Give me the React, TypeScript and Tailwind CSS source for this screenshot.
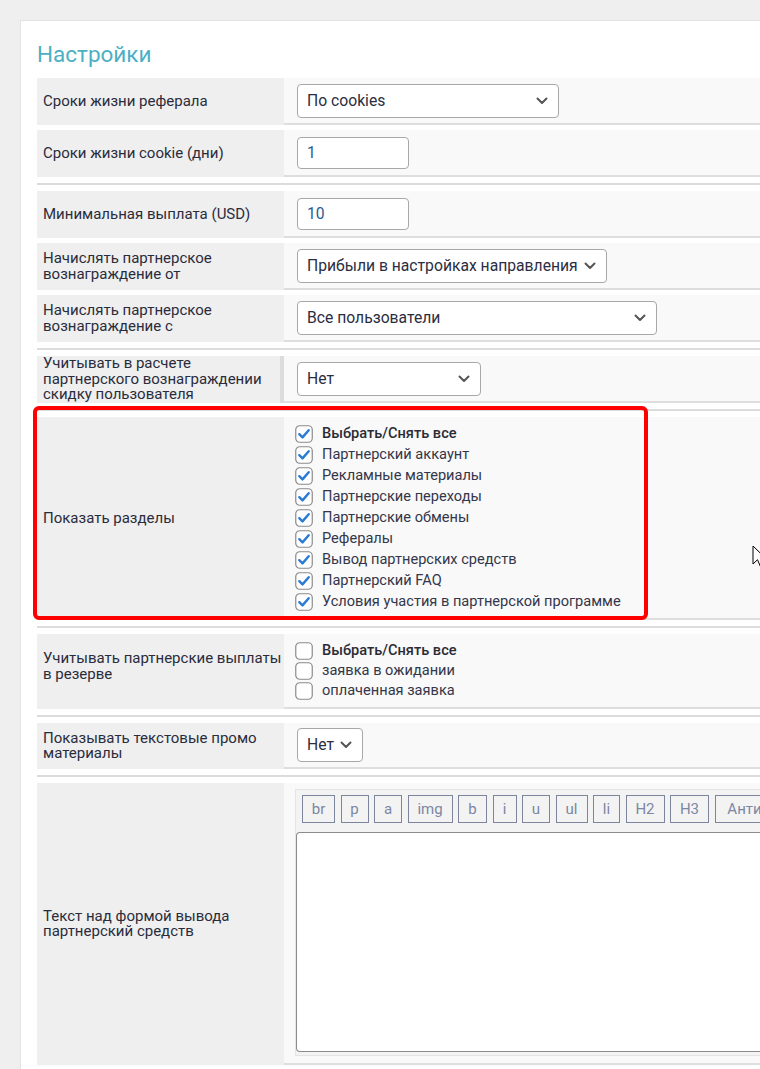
import React from "react"

const font = { fontFamily: "Roboto, 'Noto Sans', Arial, sans-serif" }

function Chevron() {
  return (
    <svg width="12" height="8" viewBox="0 0 12 8" className="shrink-0">
      <path d="M1.5 1.5l4.5 4.5 4.5-4.5" fill="none" stroke="#555" strokeWidth="2" strokeLinecap="round" strokeLinejoin="round" />
    </svg>
  )
}

function Select({ text, w }: { text: string; w: string }) {
  return (
    <div className={`${w} h-[34px] bg-white border border-[#a8a8a8] rounded-[4px] flex items-center justify-between pl-[9px] pr-[10px] text-[15.7px] text-[#2b2d42]`}>
      <span className="whitespace-nowrap">{text}</span>
      <Chevron />
    </div>
  )
}

function Input({ value }: { value: string }) {
  return (
    <div className="w-[112px] h-[32px] bg-white border border-[#a8a8a8] rounded-[4px] flex items-center pl-[9px] text-[15.7px] text-[#2c5a92]">
      {value}
    </div>
  )
}

function Box({ checked }: { checked: boolean }) {
  return (
    <svg width="18" height="18" viewBox="0 0 18 18" className="shrink-0">
      <rect x="0.75" y="0.75" width="16.5" height="16.5" rx="4" fill="#fff" stroke="#8a8a8a" strokeWidth="1.2" />
      {checked && (
        <path d="M4.3 9.2l3.2 3.2 6.2-7.2" fill="none" stroke="#2a7bd3" strokeWidth="2.4" strokeLinecap="round" strokeLinejoin="round" />
      )}
    </svg>
  )
}

function Checks({ items, checked, step }: { items: string[]; checked: boolean; step: string }) {
  return (
    <div className="flex flex-col">
      {items.map((t, i) => (
        <div key={i} className={`flex items-center gap-[9px] ${step}`}>
          <Box checked={checked} />
          <span className={`text-[14.6px] whitespace-nowrap ${i === 0 ? "font-medium text-[#2b2b35]" : "text-[#34364a]"}`}>{t}</span>
        </div>
      ))}
    </div>
  )
}

function Row({ label, h, children, labelCls = "", valueCls = "pl-[13px]" }: { label: React.ReactNode; h: string; children?: React.ReactNode; labelCls?: string; valueCls?: string }) {
  return (
    <div className={`flex ${h} mb-[5px]`}>
      <div className={`w-[247px] shrink-0 bg-[#efefef] flex items-center pl-[6px] text-[15px] leading-[15.5px] text-[#2a2c3c] whitespace-nowrap ${labelCls}`}>
        <div>{label}</div>
      </div>
      <div className={`flex-1 bg-[#f9f9f9] border-b-2 border-[#dedede] flex items-center ${valueCls}`}>{children}</div>
    </div>
  )
}

function Sep() {
  return <div className="h-[2px] bg-[#dcdcdc] mt-[6px] mb-[6px]" />
}

const sections = [
  "Выбрать/Снять все",
  "Партнерский аккаунт",
  "Рекламные материалы",
  "Партнерские переходы",
  "Партнерские обмены",
  "Рефералы",
  "Вывод партнерских средств",
  "Партнерский FAQ",
  "Условия участия в партнерской программе",
]

const reserve = ["Выбрать/Снять все", "заявка в ожидании", "оплаченная заявка"]

const tags = [
  { t: "br", w: "w-[33px]" },
  { t: "p", w: "w-[28px]" },
  { t: "a", w: "w-[28px]" },
  { t: "img", w: "w-[45px]" },
  { t: "b", w: "w-[29px]" },
  { t: "i", w: "w-[24px]" },
  { t: "u", w: "w-[28px]" },
  { t: "ul", w: "w-[32px]" },
  { t: "li", w: "w-[27px]" },
  { t: "H2", w: "w-[39px]" },
  { t: "H3", w: "w-[39px]" },
  { t: "Анти", w: "w-[60px]" },
]

export default function App() {
  return (
    <div className="relative w-[760px] h-[1069px] overflow-hidden bg-[#efefef]" style={font}>
      <div className="ml-[20px] mt-[20px] h-[1049px] bg-white border-l border-t border-[#e3e3e3] pl-[16px] pt-[19px]">
        <h1 className="text-[22.5px] leading-[28px] text-[#4bb0c4] mb-[10px]">Настройки</h1>

        <Row label="Сроки жизни реферала" h="h-[47px]">
          <Select text="По cookies" w="w-[262px]" />
        </Row>
        <Row label="Сроки жизни cookie (дни)" h="h-[47px]">
          <Input value="1" />
        </Row>
        <Sep />
        <Row label="Минимальная выплата (USD)" h="h-[47px]">
          <Input value="10" />
        </Row>
        <Row label={<>Начислять партнерское<br />вознаграждение от</>} h="h-[47px]">
          <Select text="Прибыли в настройках направления" w="w-[310px]" />
        </Row>
        <Row label={<>Начислять партнерское<br />вознаграждение с</>} h="h-[47px]">
          <Select text="Все пользователи" w="w-[360px]" />
        </Row>
        <Sep />
        <Row
          label={<>Учитывать в расчете<br />партнерского вознаграждении<br />скидку пользователя</>}
          h="h-[47px]"
          labelCls="border-r-[4px] border-[#dcdcdc]"
        >
          <Select text="Нет" w="w-[184px]" />
        </Row>
        <Sep />
        <Row label="Показать разделы" h="h-[203px]" valueCls="pl-[11px]">
          <Checks items={sections} checked step="h-[21px]" />
        </Row>
        <Sep />
        <Row label={<>Учитывать партнерские выплаты<br />в резерве</>} h="h-[75px]" labelCls="pb-[10px]" valueCls="pl-[11px]">
          <Checks items={reserve} checked={false} step="h-[20px]" />
        </Row>
        <Sep />
        <Row label={<>Показывать текстовые промо<br />материалы</>} h="h-[46px]">
          <Select text="Нет" w="w-[66px]" />
        </Row>
        <Sep />
        <Row label={<>Текст над формой вывода<br />партнерский средств</>} h="h-[282px]" valueCls="pl-[11px] items-start pt-[6px]">
          <div className="flex-1 h-[267px] bg-[#f3f3f3] border border-[#e4e4e4] border-r-0 flex flex-col">
            <div className="flex gap-[5.5px] pl-[6px] pt-[5px] h-[42px] shrink-0">
              {tags.map((b) => (
                <div key={b.t} className={`${b.w} h-[28px] shrink-0 border border-[#7c859c] flex items-center justify-center text-[15px] text-[#7c87a2]`}>
                  {b.t}
                </div>
              ))}
            </div>
            <div className="h-[220px] bg-white border border-[#8c8c8c] border-r-0 rounded-l-[4px]" />
          </div>
        </Row>
      </div>

      {/* annotation */}
      <div className="absolute left-[33px] top-[406px] w-[615px] h-[214px] border-[4px] border-[#ff0000] rounded-[6px]" />

      {/* mouse pointer */}
      <svg className="absolute left-[752px] top-[545px]" width="14" height="24" viewBox="0 0 14 24">
        <path d="M1 1v18l4.5-4.3 3 7 3-1.3-3-6.8H14z" fill="#fff" stroke="#000" strokeWidth="1" strokeLinejoin="round" />
      </svg>
    </div>
  )
}
